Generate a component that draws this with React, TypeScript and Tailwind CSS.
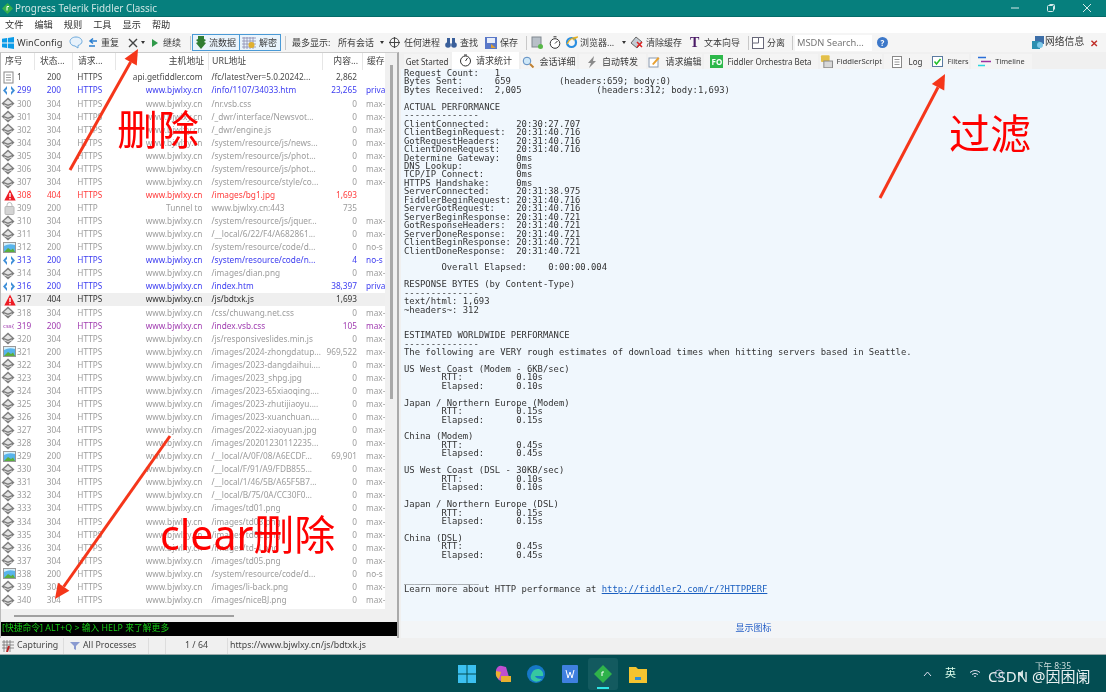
import React from "react";

const UI = "font-['Noto_Sans','Noto_Sans_CJK_SC',sans-serif]";

type Row = [string, string, string, string, string, string, string, string];

const gray = (n: string, url: string, cache = "max-", size = "0"): Row => [n, "304", "HTTPS", "www.bjwlxy.cn", url, size, cache, "gem"];
const pic = (n: string, url: string, cache = "no-s", size = "0"): Row => [n, "200", "HTTPS", "www.bjwlxy.cn", url, size, cache, "img"];

const rows: Row[] = [
  ["1", "200", "HTTPS", "api.getfiddler.com", "/fc/latest?ver=5.0.20242...", "2,862", "", "doc"],
  ["299", "200", "HTTPS", "www.bjwlxy.cn", "/info/1107/34033.htm", "23,265", "priva", "html"],
  gray("300", "/nr.vsb.css"),
  gray("301", "/_dwr/interface/Newsvot..."),
  gray("302", "/_dwr/engine.js"),
  gray("304", "/system/resource/js/news..."),
  gray("305", "/system/resource/js/phot..."),
  gray("306", "/system/resource/js/phot..."),
  gray("307", "/system/resource/style/co..."),
  ["308", "404", "HTTPS", "www.bjwlxy.cn", "/images/bg1.jpg", "1,693", "", "err"],
  ["309", "200", "HTTP", "Tunnel to", "www.bjwlxy.cn:443", "735", "", "lock"],
  gray("310", "/system/resource/js/jquer..."),
  gray("311", "/__local/6/22/F4/A682861..."),
  pic("312", "/system/resource/code/d..."),
  ["313", "200", "HTTPS", "www.bjwlxy.cn", "/system/resource/code/n...", "4", "no-s", "html"],
  gray("314", "/images/dian.png"),
  ["316", "200", "HTTPS", "www.bjwlxy.cn", "/index.htm", "38,397", "priva", "html"],
  ["317", "404", "HTTPS", "www.bjwlxy.cn", "/js/bdtxk.js", "1,693", "", "sel"],
  gray("318", "/css/chuwang.net.css"),
  ["319", "200", "HTTPS", "www.bjwlxy.cn", "/index.vsb.css", "105", "max-", "css"],
  gray("320", "/js/responsiveslides.min.js"),
  pic("321", "/images/2024-zhongdatup...", "max-", "969,522"),
  gray("322", "/images/2023-dangdaihui...."),
  gray("323", "/images/2023_shpg.jpg"),
  gray("324", "/images/2023-65xiaoqing...."),
  gray("325", "/images/2023-zhutijiaoyu...."),
  gray("326", "/images/2023-xuanchuan...."),
  gray("327", "/images/2022-xiaoyuan.jpg"),
  gray("328", "/images/20201230112235..."),
  pic("329", "/__local/A/0F/08/A6ECDF...", "max-", "69,901"),
  gray("330", "/__local/F/91/A9/FDB855..."),
  gray("331", "/__local/1/46/5B/A65F5B7..."),
  gray("332", "/__local/B/75/0A/CC30F0..."),
  gray("333", "/images/td01.png"),
  gray("334", "/images/td03.png"),
  gray("335", "/images/td02.png"),
  gray("336", "/images/td-4.png"),
  gray("337", "/images/td05.png"),
  pic("338", "/system/resource/code/d..."),
  gray("339", "/images/li-back.png"),
  gray("340", "/images/niceBJ.png"),
];

const textColor: Record<string, string> = {
  gem: "text-[#9c9c9c]",
  img: "text-[#9c9c9c]",
  lock: "text-[#9c9c9c]",
  doc: "text-[#4a4a4a]",
  sel: "text-[#333333]",
  html: "text-[#3c3cf0]",
  err: "text-[#ff3b3b]",
  css: "text-[#a03cb0]",
};

function RowIcon({ kind }: { kind: string }) {
  if (kind === "gem")
    return (
      <svg width="14" height="13" viewBox="0 0 14 13" className="ml-[1px]">
        <path d="M7 0.5 13.5 6.5 7 12.5 0.5 6.5Z" fill="#7e7e7e" />
        <path d="M7 2.5 11 6 7 7.5 3 6Z" fill="#e4e4e4" />
        <path d="M3 8 7 9.5 11 8" stroke="#dddddd" fill="none" />
      </svg>
    );
  if (kind === "doc")
    return (
      <svg width="13" height="13" viewBox="0 0 13 13" className="ml-[2px]">
        <rect x="2" y="1" width="9" height="11" fill="#fff" stroke="#888" />
        <path d="M4 4h5M4 6.5h5M4 9h5" stroke="#999" />
      </svg>
    );
  if (kind === "html")
    return (
      <svg width="14" height="11" viewBox="0 0 14 11" className="ml-[2px]">
        <path d="M5 1 1 5.5 5 10V7L3.5 5.5 5 4Z" fill="#3f8fd8" />
        <path d="M9 1 13 5.5 9 10V7L10.5 5.5 9 4Z" fill="#3f8fd8" />
      </svg>
    );
  if (kind === "err" || kind === "sel")
    return (
      <svg width="12" height="12" viewBox="0 0 12 12" className="ml-[4px]">
        <path d="M6 0.5 11.7 11.5H0.3Z" fill="#ee1c25" />
        <path d="M6 4v4M6 9v1.5" stroke="#fff" strokeWidth="1.4" />
      </svg>
    );
  if (kind === "lock")
    return (
      <svg width="11" height="13" viewBox="0 0 11 13" className="ml-[4px]">
        <path d="M3 5V3a2.5 2.5 0 0 1 5 0v2" stroke="#bbb" fill="none" />
        <rect x="1" y="4.5" width="9" height="8" rx="1" fill="#d4d4d4" stroke="#b8b8b8" />
      </svg>
    );
  if (kind === "img")
    return (
      <svg width="13" height="11" viewBox="0 0 13 11" className="ml-[3px]">
        <rect x="0.5" y="0.5" width="12" height="10" fill="#58b4ec" stroke="#999" />
        <path d="M1 10 5 6l3 2 2-1.5 2 3.5Z" fill="#5cae3c" />
        <path d="M1 4Q6 1 12 3V1H1Z" fill="#d7f0fb" />
      </svg>
    );
  return <span className="text-[6px] text-[#a03cb0] ml-[3px] leading-none">css{"{"}</span>;
}

function ListRow({ row }: { row: Row }) {
  const [num, status, proto, host, url, size, cache, kind] = row;
  return (
    <div className={`flex items-center h-[13.075px] leading-none text-[8.25px] whitespace-nowrap ${textColor[kind]} ${kind === "sel" ? "bg-[#efefef]" : ""}`}>
      <div className="w-[17px] flex items-center">
        <RowIcon kind={kind} />
      </div>
      <div className="w-[30px]">{num}</div>
      <div className="w-[30.5px]">{status}</div>
      <div className="w-[37.5px]">{proto}</div>
      <div className="w-[88px] text-right">{host}</div>
      <div className="w-[110px] ml-[9px]">{url}</div>
      <div className="w-[36px] text-right">{size}</div>
      <div className="w-[19px] ml-[9px]">{cache}</div>
    </div>
  );
}

function HeaderCell({ w, right, text, pl }: { w: string; right?: boolean; text: string; pl: string }) {
  return (
    <div className={`${w} ${pl} ${right ? "text-right pr-[4px]" : ""} h-full flex items-center ${right ? "justify-end" : ""} border-r border-[#e6e6e6] whitespace-nowrap`}>
      {text}
    </div>
  );
}

const perf = `Request Count:   1
Bytes Sent:      659         (headers:659; body:0)
Bytes Received:  2,005              (headers:312; body:1,693)

ACTUAL PERFORMANCE
--------------
ClientConnected:     20:30:27.707
ClientBeginRequest:  20:31:40.716
GotRequestHeaders:   20:31:40.716
ClientDoneRequest:   20:31:40.716
Determine Gateway:   0ms
DNS Lookup:          0ms
TCP/IP Connect:      0ms
HTTPS Handshake:     0ms
ServerConnected:     20:31:38.975
FiddlerBeginRequest: 20:31:40.716
ServerGotRequest:    20:31:40.716
ServerBeginResponse: 20:31:40.721
GotResponseHeaders:  20:31:40.721
ServerDoneResponse:  20:31:40.721
ClientBeginResponse: 20:31:40.721
ClientDoneResponse:  20:31:40.721

       Overall Elapsed:    0:00:00.004

RESPONSE BYTES (by Content-Type)
--------------
text/html: 1,693
~headers~: 312


ESTIMATED WORLDWIDE PERFORMANCE
--------------
The following are VERY rough estimates of download times when hitting servers based in Seattle.

US West Coast (Modem - 6KB/sec)
       RTT:          0.10s
       Elapsed:      0.10s

Japan / Northern Europe (Modem)
       RTT:          0.15s
       Elapsed:      0.15s

China (Modem)
       RTT:          0.45s
       Elapsed:      0.45s

US West Coast (DSL - 30KB/sec)
       RTT:          0.10s
       Elapsed:      0.10s

Japan / Northern Europe (DSL)
       RTT:          0.15s
       Elapsed:      0.15s

China (DSL)
       RTT:          0.45s
       Elapsed:      0.45s


______________
`;

function Sep() {
  return <span className="block w-px h-[14px] bg-[#c8c8c8]" />;
}

function Tab({ w, active, children }: { w: string; active?: boolean; children: React.ReactNode }) {
  return (
    <div className={`${w} flex items-center justify-center gap-[4px] whitespace-nowrap ${active ? "h-[17px] bg-white" : "h-[15px] bg-[#f4f4f4]"}`}>
      {children}
    </div>
  );
}

function Arrow({ x1, y1, x2, y2 }: { x1: number; y1: number; x2: number; y2: number }) {
  const a = Math.atan2(y2 - y1, x2 - x1);
  const back = 15;
  const side = 7;
  const bx = x2 - back * Math.cos(a);
  const by = y2 - back * Math.sin(a);
  const px = -Math.sin(a) * side;
  const py = Math.cos(a) * side;
  return (
    <g>
      <path d={`M${x1} ${y1}L${bx} ${by}`} stroke="#f5361a" strokeWidth="3" />
      <path d={`M${x2} ${y2}L${bx + px} ${by + py}L${bx - px} ${by - py}Z`} fill="#f5361a" />
    </g>
  );
}

export default function App() {
  return (
    <div className={`relative w-[1106px] h-[692px] overflow-hidden flex flex-col bg-white text-[#3a3a3a] blur-[0.3px] ${UI}`}>
      {/* title bar */}
      <div className="h-[17px] bg-[#067f7d] border-b border-[#046b69] flex items-center text-[#cfe6e5] text-[9.9px]">
        <svg width="11" height="11" viewBox="0 0 11 11" className="ml-[2px]">
          <path d="M5.5 0 11 5.5 5.5 11 0 5.5Z" fill="#36b04a" />
          <path d="M5 3.5h2M5 3.5v4" stroke="#fff" />
        </svg>
        <span className="ml-[2px]">Progress Telerik Fiddler Classic</span>
        <div className="ml-auto flex items-center gap-[26px] pr-[14px]">
          <svg width="10" height="10" viewBox="0 0 10 10"><path d="M1 5h8" stroke="#d5eaea" /></svg>
          <svg width="10" height="10" viewBox="0 0 10 10" fill="none" stroke="#d5eaea"><rect x="1.5" y="2.5" width="6" height="6" rx="1" /><path d="M3.5 1.5h4a1 1 0 0 1 1 1v4" /></svg>
          <svg width="10" height="10" viewBox="0 0 10 10" stroke="#d5eaea"><path d="M1 1l8 8M9 1 1 9" /></svg>
        </div>
      </div>

      {/* menu */}
      <div className="h-[16px] bg-white flex items-center gap-[11px] pl-[5px] text-[9.2px] text-[#333]">
        <span>文件</span><span>编辑</span><span>规则</span><span>工具</span><span>显示</span><span>帮助</span>
      </div>

      {/* toolbar */}
      <div className="h-[19px] bg-[#f5f5f5] flex items-center text-[9px] whitespace-nowrap">
        <svg width="12" height="12" viewBox="0 0 12 12" className="ml-[2px]" fill="#0a9be8"><path d="M0 1.8 5 1v4.6H0ZM5.8 .9 12 0v5.6H5.8ZM0 6.4h5V11l-5-.8ZM5.8 6.4H12V12l-6.2-.9Z" /></svg>
        <span className="ml-[3px] w-[46px] text-[9.3px]">WinConfig</span>
        <svg width="14" height="13" viewBox="0 0 14 13" className="ml-[6px]"><path d="M7 1C3.5 1 1 3 1 5.5S3.5 10 6 10l3 2V9.5c2-.7 4-2 4-4C13 3 10.500 1 7 1Z" fill="#e8f2fb" stroke="#6aa8dc" /></svg>
        <svg width="10" height="12" viewBox="0 0 10 12" className="ml-[5px]" fill="none" stroke="#2b7fd0" strokeWidth="1.5"><path d="M9 4H3M5 1.500 2 4l3 2.500M1 9h6" /></svg>
        <span className="ml-[3px] w-[20px]">重复</span>
        <svg width="10" height="10" viewBox="0 0 10 10" className="ml-[7px]" stroke="#444" strokeWidth="1.4"><path d="M1 1l8 8M9 1 1 9" /></svg>
        <span className="ml-[3px] w-0 h-0 border-x-[2.500px] border-x-transparent border-t-[3px] border-t-[#333]" />
        <span className="ml-[7px] w-0 h-0 border-y-[4.500px] border-y-transparent border-l-[6px] border-l-[#2f9a4a]" />
        <span className="ml-[5px] w-[19px]">继续</span>
        <span className="ml-[8px]"><Sep /></span>
        <div className="ml-[1px] h-[17px] w-[48px] border border-[#4a9ad6] bg-[#eaf4fc] flex items-center pl-[3px] gap-[3px]">
          <svg width="10" height="13" viewBox="0 0 10 13"><path d="M2 0h6v3l2 1-2 2 2 1-5 6-5-6 2-1-2-2 2-1Z" fill="#2f7d32" /></svg>
          <span>流数据</span>
        </div>
        <div className="h-[17px] w-[41px] border border-[#4a9ad6] border-l-0 bg-[#eaf4fc] flex items-center pl-[2px] gap-[3px]">
          <svg width="14" height="12" viewBox="0 0 14 12"><path d="M0 1h14M0 4h14M0 7h14M0 10h14M2 0v12M5 0v12M8 0v12M11 0v12" stroke="#8c8cb0" strokeWidth=".8" /><circle cx="9.500" cy="8" r="3" fill="#e0b030" /></svg>
          <span>解密</span>
        </div>
        <span className="ml-[4px]"><Sep /></span>
        <span className="ml-[6px] w-[46px]">最多显示:</span>
        <span className="w-[37px]">所有会话</span>
        <span className="ml-[5px] w-0 h-0 border-x-[2.500px] border-x-transparent border-t-[3px] border-t-[#333]" />
        <svg width="11" height="11" viewBox="0 0 11 11" className="ml-[5px]" fill="none" stroke="#444"><circle cx="5.500" cy="5.500" r="4.500" /><path d="M5.500 0v11M0 5.500h11" /></svg>
        <span className="ml-[4px] w-[36px]">任何进程</span>
        <svg width="12" height="11" viewBox="0 0 12 11" className="ml-[5px]" fill="#3a5f9a"><circle cx="3" cy="8" r="2.800" /><circle cx="9" cy="8" r="2.800" /><rect x="2" y="1" width="3" height="6" /><rect x="7" y="1" width="3" height="6" /></svg>
        <span className="ml-[3px] w-[19px]">查找</span>
        <svg width="12" height="12" viewBox="0 0 12 12" className="ml-[6px]"><rect width="12" height="12" fill="#5a78c8" /><rect x="2" y="1" width="8" height="5" fill="#e8eefa" /><path d="M6 7l5 4H6Z" fill="#e0a030" /></svg>
        <span className="ml-[3px] w-[19px]">保存</span>
        <span className="ml-[7px]"><Sep /></span>
        <svg width="12" height="13" viewBox="0 0 12 13" className="ml-[4px]"><rect x="1" y="1" width="9" height="10" fill="#b8c0c8" stroke="#808890" /><circle cx="9.500" cy="10.500" r="2.500" fill="#58b848" /></svg>
        <svg width="12" height="13" viewBox="0 0 12 13" className="ml-[6px]" fill="#fff" stroke="#333"><circle cx="6" cy="7.500" r="4.800" /><path d="M6 7.500 8.500 5M4.500 .8h3" /></svg>
        <svg width="13" height="13" viewBox="0 0 13 13" className="ml-[4px]"><circle cx="6.500" cy="6.500" r="4.500" fill="none" stroke="#2a8ee0" strokeWidth="2.200" /><path d="M2 8C5 2 10 1 12.500 1 11 2 9 3 8 4" stroke="#e8b020" strokeWidth="1.200" fill="none" /></svg>
        <span className="ml-[2px] w-[34px]">浏览器...</span>
        <span className="ml-[8px] w-0 h-0 border-x-[2.500px] border-x-transparent border-t-[3px] border-t-[#333]" />
        <svg width="14" height="13" viewBox="0 0 14 13" className="ml-[4px]"><path d="M6 1l6 5-5 6-6-5Z" fill="#c4ccd4" stroke="#666" /><path d="M7 6l5 5M12 6l-5 5" stroke="#e02020" strokeWidth="1.500" /></svg>
        <span className="ml-[2px] w-[37px]">清除缓存</span>
        <span className="ml-[7px] w-[11px] text-[14px] leading-none font-bold text-[#4a1a66] font-['Liberation_Serif',serif]">T</span>
        <span className="ml-[3px] w-[37px]">文本向导</span>
        <span className="ml-[7px]"><Sep /></span>
        <svg width="12" height="12" viewBox="0 0 12 12" className="ml-[3px]" fill="#fff" stroke="#667"><rect x=".5" y=".5" width="11" height="11" /><path d="M.5 6h6V.500" /></svg>
        <span className="ml-[3px] w-[18px]">分离</span>
        <span className="ml-[7px]"><Sep /></span>
        <span className="ml-[2px] w-[77px] h-[16px] bg-white text-[#777] flex items-center pl-[2px] text-[9.300px]">MSDN Search...</span>
        <span className="ml-[5px] w-[11px] h-[11px] rounded-full bg-[#3d78c9] text-white text-[8px] font-bold flex items-center justify-center">?</span>
        <svg width="13" height="13" viewBox="0 0 13 13" className="ml-[144px]"><rect x="3" y="0" width="9" height="8" fill="#3d6ea8" /><rect x="0" y="5" width="8" height="8" fill="#2b8fb0" /><circle cx="8" cy="9" r="3" fill="#7cc8e8" /></svg>
        <span className="ml-[0px] w-[40px] text-[9.800px]">网络信息</span>
        <span className="ml-[5px] text-[#c0302a] text-[10px] font-bold leading-none">✕</span>
      </div>

      {/* main */}
      <div className="h-[586px] flex bg-[#f0f0f0]">
        {/* session list */}
        <div className="w-[399px] flex flex-col border-l border-[#bbb] border-r-2 border-r-[#aaa] border-t border-t-[#ccc] shrink-0">
          <div className="flex flex-1">
            <div className="w-[384px] bg-white flex flex-col text-[8.800px] h-[556px] overflow-hidden">
              <div className="h-[17px] flex items-center text-[#444] shrink-0">
                <HeaderCell w="w-[34px]" pl="pl-[4px]" text="序号" />
                <HeaderCell w="w-[38px]" pl="pl-[5px]" text="状态..." />
                <HeaderCell w="w-[43px]" pl="pl-[5px]" text="请求..." />
                <HeaderCell w="w-[93px]" right pl="" text="主机地址" />
                <HeaderCell w="w-[114px]" pl="pl-[3px]" text="URL地址" />
                <HeaderCell w="w-[40px]" right pl="" text="内容..." />
                <div className="pl-[4px] whitespace-nowrap">缓存</div>
              </div>
              <div className="mt-[1px] -ml-[1px]">
                {rows.map((r) => (
                  <ListRow key={r[0]} row={r} />
                ))}
              </div>
            </div>
            <div className="w-[12px] flex justify-center">
              <div className="w-[3px] h-[334px] mt-[12px] bg-[#a8a8a8]" />
            </div>
          </div>
          <div className="h-[13px] flex items-center pl-[13px]">
            <div className="w-[220px] h-[2px] bg-[#a0a0a0]" />
          </div>
          <div className="h-[14px] mb-[2px] bg-black text-[#16cc16] text-[8.800px] flex items-center pl-[1px] whitespace-nowrap">
            [快捷命令] ALT+Q &gt; 输入 HELP 来了解更多
          </div>
        </div>

        {/* inspector */}
        <div className="flex-1 ml-[2px] flex flex-col min-w-0">
          <div className="h-[17px] flex items-end text-[8px] bg-[#f0f0f0] pl-[3px] gap-[2px]">
            <Tab w="w-[46px]">Get Started</Tab>
            <Tab w="w-[67px]" active>
              <svg width="13" height="13" viewBox="0 0 13 13" fill="none" stroke="#333"><circle cx="6.500" cy="7" r="5" /><path d="M6.500 7 8.500 4M5 1h3" /></svg>
              <span className="text-[9px]">请求统计</span>
            </Tab>
            <Tab w="w-[56px]">
              <svg width="13" height="12" viewBox="0 0 13 12" fill="none"><circle cx="5" cy="5" r="3.800" fill="#cfe8f8" stroke="#5a8ac0" /><path d="M8 8l3.500 3.500" stroke="#c08030" strokeWidth="2" /></svg>
              <span className="text-[9px]">会话详细</span>
            </Tab>
            <Tab w="w-[67px]">
              <svg width="10" height="12" viewBox="0 0 10 12" className="mr-[1px]"><path d="M7 0 1 7h3l-2 5 7-7H6Z" fill="#8a8a8a" /></svg>
              <span className="text-[9px]">自动转发</span>
            </Tab>
            <Tab w="w-[54px]">
              <svg width="13" height="12" viewBox="0 0 13 12"><rect x="1" y="2" width="9" height="9" fill="#fff" stroke="#8a9ab0" /><path d="M4 8 10 1l1.500 1.500L5.500 9Z" fill="#e8a030" /></svg>
              <span className="text-[9px]">请求编辑</span>
            </Tab>
            <Tab w="w-[114px]">
              <span className="w-[13px] h-[13px] bg-[#2db84a] text-white text-[8px] font-bold flex items-center justify-center leading-none">FO</span>
              <span>Fiddler Orchestra Beta</span>
            </Tab>
            <Tab w="w-[62px]">
              <svg width="13" height="13" viewBox="0 0 13 13"><rect x="1" y="0" width="9" height="7" rx="1" fill="#e3c04a" /><rect x="4" y="6" width="9" height="7" fill="#d8d8d8" stroke="#888" /></svg>
              <span className="text-[7.700px]">FiddlerScript</span>
            </Tab>
            <Tab w="w-[46px]">
              <svg width="10" height="12" viewBox="0 0 10 12" className="mr-[3px]"><rect x=".5" y=".5" width="9" height="11" fill="#fff" stroke="#888" /><path d="M2.500 3.500h5M2.500 6h5M2.500 8.500h5" stroke="#999" /></svg>
              <span>Log</span>
            </Tab>
            <Tab w="w-[37px]">
              <svg width="11" height="11" viewBox="0 0 11 11"><rect x=".5" y=".5" width="10" height="10" fill="#fff" stroke="#5a7aa0" /><path d="M2.500 5.500 4.500 8 8.500 3" stroke="#22c02a" strokeWidth="1.500" fill="none" /></svg>
              <span className="text-[7.400px]">Filters</span>
            </Tab>
            <Tab w="w-[61px]">
              <svg width="13" height="11" viewBox="0 0 13 11"><path d="M0 1.500h8" stroke="#2a6fd8" strokeWidth="1.500" /><path d="M3 5.500h10" stroke="#9a30a0" strokeWidth="1.500" /><path d="M0 9.500h7" stroke="#28d8e0" strokeWidth="1.500" /></svg>
              <span className="text-[7.300px]">Timeline</span>
            </Tab>
          </div>
          <div className="flex-1 bg-[#f0f7fd] min-h-0 overflow-hidden pl-[3px]">
            <pre className="font-['DejaVu_Sans_Mono',monospace] text-[8.900px] leading-[8.450px] text-[#333] whitespace-pre">
              {perf}
              Learn more about HTTP performance at <a className="text-[#1a5fc0] underline">http://fiddler2.com/r/?HTTPPERF</a>
            </pre>
          </div>
          <div className="h-[17px] bg-[#f3f5f7] flex items-center justify-center text-[#2a62c8] text-[9px]">
            <span className="-mt-[3px]">显示图标</span>
          </div>
        </div>
      </div>

      {/* status bar */}
      <div className="h-[16px] bg-[#f0f0f0] flex items-center text-[8.800px] text-[#444] whitespace-nowrap">
        <div className="w-[64px] h-full flex items-center pl-[2px] gap-[3px] border-r border-[#ddd]">
          <svg width="12" height="12" viewBox="0 0 12 12"><path d="M0 2h12M0 5h12M0 8h12M2 0v12M5 0v12M8 0v12" stroke="#666" strokeWidth=".7" /><path d="M7 6 5 12" stroke="#c02020" strokeWidth="2" /></svg>
          <span>Capturing</span>
        </div>
        <div className="w-[85px] h-full flex items-center pl-[6px] gap-[3px] border-r border-[#ddd]">
          <svg width="10" height="8" viewBox="0 0 10 8"><path d="M0 0h10L6 4v4L4 7V4Z" fill="#8a9ad0" /></svg>
          <span>All Processes</span>
        </div>
        <div className="w-[17px] h-full border-r border-[#ddd]" />
        <div className="w-[62px] h-full flex items-center justify-center border-r border-[#ddd]">1 / 64</div>
        <span className="ml-[2px]">https://www.bjwlxy.cn/js/bdtxk.js</span>
      </div>

      {/* taskbar */}
      <div className="flex-1 bg-[#034d52] border-t border-[#9aa] flex items-center relative">
        <div className="ml-[458px] flex items-center">
          <svg width="18" height="18" viewBox="0 0 18 18" fill="#3cc0f0"><rect width="8.500" height="8.500" /><rect x="9.500" width="8.500" height="8.500" /><rect y="9.500" width="8.500" height="8.500" /><rect x="9.500" y="9.500" width="8.500" height="8.500" /></svg>
          <svg width="18" height="18" viewBox="0 0 18 18" className="ml-[17px]"><path d="M3 5Q5 0 9 1L13 2 16 12 8 16Q2 14 3 5Z" fill="#c04fd0" /><path d="M3 6Q2 12 6 14L8 7Z" fill="#f0b030" /><rect x="8" y="11" width="10" height="6" fill="#e8b030" /></svg>
          <svg width="18" height="18" viewBox="0 0 18 18" className="ml-[16px]"><circle cx="9" cy="9" r="9" fill="#1678c8" /><path d="M4 10Q6 3 12 4 17 6 16 11H8Q9 14 15 14 10 19 5 15 3 13 4 10Z" fill="#36c8a0" /></svg>
          <svg width="16" height="18" viewBox="0 0 16 18" className="ml-[17px]"><rect width="16" height="18" rx="1" fill="#3f80e0" /><path d="M4 5l2 8 2-6 2 6 2-8" stroke="#fff" fill="none" /></svg>
          <div className="ml-[10px] w-[30px] h-[32px] bg-[#135a5f] rounded-[3px] flex flex-col items-center justify-center relative">
            <svg width="18" height="18" viewBox="0 0 18 18"><path d="M9 0 18 9 9 18 0 9Z" fill="#2fb24a" /><path d="M8 7h2M8 7v4" stroke="#fff" /></svg>
            <span className="absolute bottom-[1px] w-[12px] h-[2px] bg-[#2ee6e6]" />
          </div>
          <svg width="18" height="18" viewBox="0 0 18 18" className="ml-[11px]"><path d="M0 2h7l2 2h9v14H0Z" fill="#f4c430" /><rect x="6" y="12" width="6" height="3" fill="#2f8fd8" /></svg>
        </div>
        <div className="ml-[276px] flex items-center text-[#dfe] text-[11px] gap-[13px]">
          <svg width="9" height="6" viewBox="0 0 9 6" fill="none" stroke="#dde"><path d="M1 5l3.500-4L8 5" /></svg>
          <span>英</span>
          <svg width="12" height="10" viewBox="0 0 12 10" fill="none" stroke="#dde"><path d="M1 3.500Q6-.5 11 3.500M3 5.500Q6 3 9 5.500M5 7.500Q6 6.500 7 7.500" /></svg>
          <svg width="10" height="10" viewBox="0 0 10 10" fill="none" stroke="#aac"><circle cx="5" cy="5" r="4" /></svg>
          <svg width="10" height="10" viewBox="0 0 10 10" fill="#cdd"><path d="M1 3.500h2L6 1v8L3 6.500H1Z" /></svg>
        </div>
        <div className="absolute left-[1035px] top-[7px] text-[#cfdede] text-[8.500px] leading-none whitespace-nowrap">下午 8:35</div>
        <div className="absolute left-[988px] top-[14px] text-[#e8f0f0] text-[15px] leading-none whitespace-nowrap">CSDN @因困阑</div>
      </div>

      {/* annotations drawn on the screenshot */}
      <svg width="1106" height="692" className="absolute inset-0 pointer-events-none">
        <Arrow x1={70} y1={170} x2={138} y2={49} />
        <Arrow x1={170} y1={436} x2={55} y2={599} />
        <Arrow x1={880} y1={198} x2={945} y2={74} />
      </svg>
      <div className="absolute left-[117px] top-[105px] text-[41px] leading-[48px] text-[#ff0000]">删除</div>
      <div className="absolute left-[160px] top-[510px] text-[41px] leading-[48px] text-[#ff0000] whitespace-nowrap">clear删除</div>
      <div className="absolute left-[949px] top-[109px] text-[41px] leading-[48px] text-[#ff0000]">过滤</div>
    </div>
  );
}
